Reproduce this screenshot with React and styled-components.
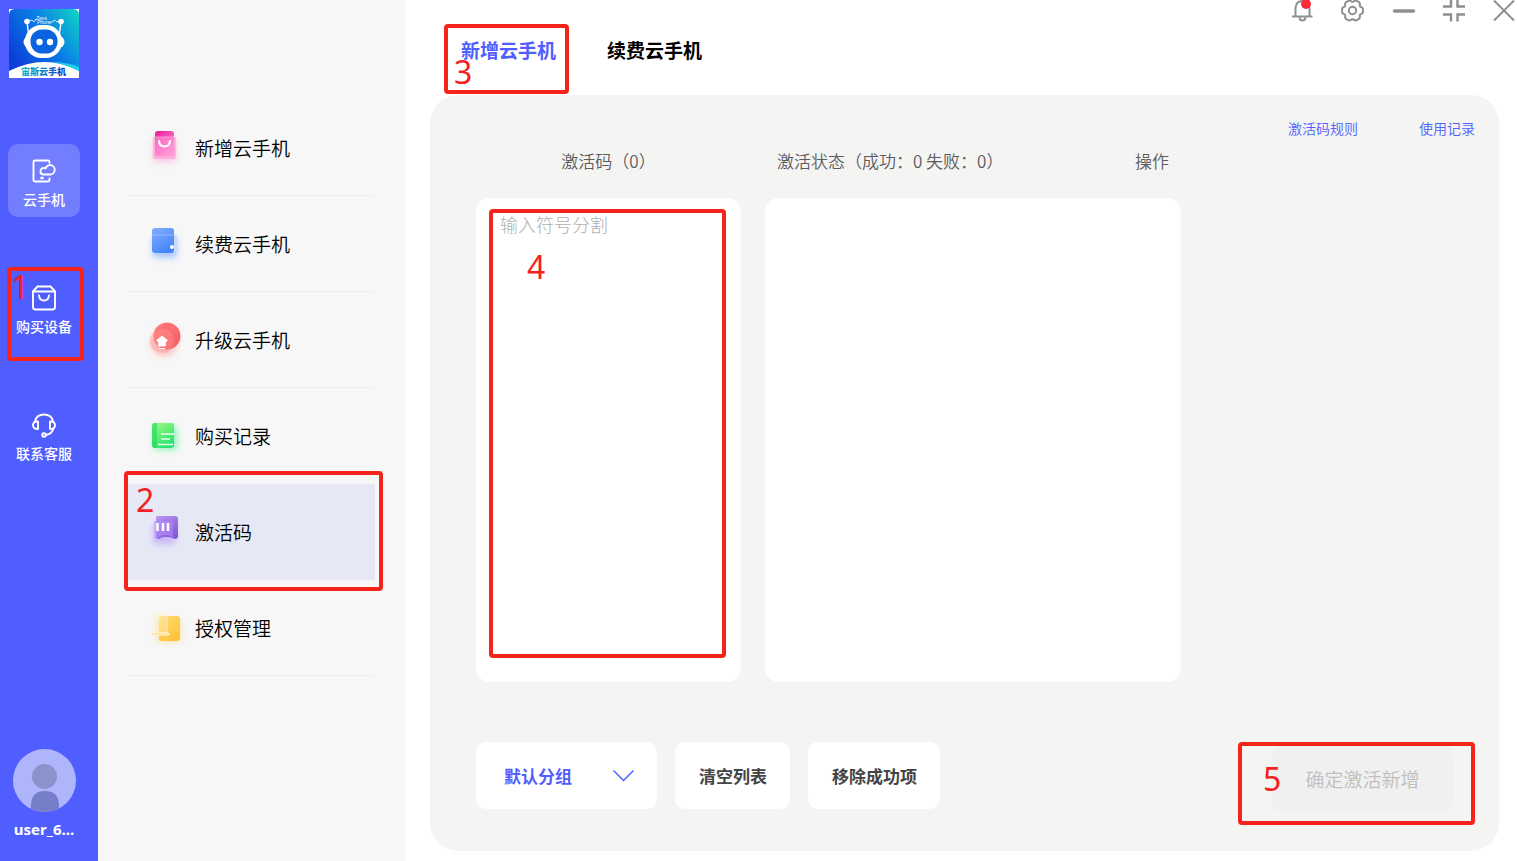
import React, {useState} from 'react';
import styled, {createGlobalStyle} from 'styled-components';


const GlobalStyle = createGlobalStyle`
    * {
        box-sizing: border-box;
    }
    body {
        margin: 0;
        font-family: "Noto Sans CJK SC", sans-serif;
        background-color: #ffffff;
        color: #000000;
    }
    button, select, textarea {
        font-family: inherit;
        border: none;
        margin: 0;
    }
    button, select {
        cursor: pointer;
    }
    svg {
        display: block;
        overflow: visible;
    }
`;

const Page = styled.div`
    display: grid;
    grid-template-columns: 98px 308px 1fr;
    min-height: 100vh;
`;

const Rail = styled.aside`
    display: flex;
    flex-direction: column;
    padding: 9px 18px 21px 8px;
    background-color: #505eff;
`;

const Logo = styled.a`
    align-self: center;
    width: 70px;
    height: 69px;
`;

const RailNav = styled.nav`
    display: flex;
    flex-direction: column;
    gap: 54px;
    margin-top: 66px;
`;

const RailButton = styled.button`
    position: relative;
    display: flex;
    flex-direction: column;
    align-items: center;
    gap: 5px;
    height: 73px;
    padding: 14px 0 0;
    border-radius: 10px;
    background-color: ${({$active}) => ($active ? '#737eff' : 'transparent')};
    color: #ffffff;
    font-size: 14px;
    font-weight: 500;
    line-height: 20px;
    white-space: nowrap;
`;

const User = styled.div`
    display: flex;
    flex-direction: column;
    align-items: center;
    gap: 6px;
    margin-top: auto;
    color: #ffffff;
    font-family: "Noto Sans", "Noto Sans CJK SC", sans-serif;
    font-size: 15px;
    font-weight: 700;
    line-height: 22px;
`;

const Menu = styled.nav`
    padding: 100px 31px 0 30px;
    background-color: #f7f7f7;
`;

const MenuButton = styled.button`
    position: relative;
    display: flex;
    align-items: center;
    gap: 9px;
    width: 100%;
    height: 96px;
    padding: 0 22px;
    border-bottom: 1px solid ${({$line}) => ($line ? '#eeeeee' : 'transparent')};
    background-color: ${({$active}) => ($active ? '#e6e8f6' : 'transparent')};
    color: #000000;
    font-size: 19px;
    font-weight: 350;
    line-height: 28px;
`;

const Main = styled.main`
    display: flex;
    flex-direction: column;
    min-width: 0;
`;

const Header = styled.header`
    display: flex;
    justify-content: space-between;
    align-items: flex-start;
    height: 95px;
    padding-left: 55px;
`;

const Tabs = styled.div`
    display: flex;
    gap: 51px;
    padding-top: 36px;
`;

const Tab = styled.button`
    position: relative;
    padding: 0;
    background: none;
    color: ${({$active}) => ($active ? '#505eff' : '#000000')};
    font-size: 19px;
    font-weight: 700;
    line-height: 28px;
`;

const WindowControls = styled.div`
    display: flex;
    gap: 26px;
    padding-right: 1px;
`;

const IconButton = styled.button`
    width: 24px;
    height: 24px;
    padding: 0;
    background: none;
    color: #8f8f8f;
`;

const Panel = styled.section`
    display: flex;
    flex: 1;
    flex-direction: column;
    margin: 0 18px 10px 24px;
    padding: 23px 24px 42px 46px;
    border-radius: 28px;
    background-color: #f4f4f2;
`;

const Links = styled.div`
    display: flex;
    justify-content: flex-end;
    gap: 61px;
`;

const Link = styled.a`
    color: #505eff;
    font-size: 14px;
    font-weight: 350;
    line-height: 20px;
    text-decoration: none;
`;

const Columns = styled.div`
    display: grid;
    flex: 1;
    grid-template-columns: 265fr 416fr 270fr;
    gap: 24px;
    margin-top: 11px;
`;

const Column = styled.div`
    display: flex;
    flex-direction: column;
    gap: 25px;
    color: #5c5c5c;
    font-size: 17px;
    font-weight: 350;
    line-height: 24px;
`;

const CodeLabel = styled.label`
    text-align: center;
`;

const StatusHead = styled.div`
    display: flex;
    justify-content: space-between;
    padding: 0 12px;
`;

const Card = styled.div`
    position: relative;
    display: flex;
    flex: 1;
    border-radius: 14px;
    background-color: #ffffff;
`;

const CodeInput = styled.textarea`
    width: 100%;
    padding: 14px 24px;
    border-radius: 14px;
    background: none;
    outline: none;
    resize: none;
    color: #444444;
    font-size: 18px;
    font-weight: 300;
    line-height: 24px;
    &::placeholder {
        color: #b0b0b0;
        opacity: 1;
    }
`;

const Footer = styled.div`
    display: flex;
    align-items: flex-start;
    gap: 18px;
    height: 67px;
    margin-top: 60px;
`;

const GroupPicker = styled.div`
    position: relative;
    width: 181px;
    height: 67px;
    svg {
        position: absolute;
        top: 28px;
        right: 23px;
        pointer-events: none;
    }
`;

const GroupSelect = styled.select`
    width: 100%;
    height: 100%;
    padding: 0 28px;
    border-radius: 10px;
    appearance: none;
    background-color: #ffffff;
    color: #505eff;
    font-size: 17px;
    font-weight: 700;
`;

const ActionButton = styled.button`
    height: 67px;
    padding: 0 23px 0 24px;
    border-radius: 10px;
    background-color: #ffffff;
    color: #444444;
    font-size: 17px;
    font-weight: 700;
`;

const ConfirmButton = styled.button`
    position: relative;
    width: 181px;
    height: 67px;
    margin: 3px 22px 0 auto;
    padding: 0;
    border-radius: 10px;
    background-color: #f0f0f0;
    color: #bfbfbf;
    font-size: 19px;
    font-weight: 350;
`;

const Frame = styled.span`
    position: absolute;
    top: ${({$top}) => $top}px;
    left: ${({$left}) => $left}px;
    width: ${({$width}) => $width}px;
    height: ${({$height}) => $height}px;
    border: 4px solid #f4241a;
    border-radius: 4px;
    pointer-events: none;
`;

// frame of the code box keeps its distance to all four sides
const CodeFrame = styled(Frame)`
    inset: 11px 15px 24px 13px;
    width: auto;
    height: auto;
`;

const Step = styled.span`
    position: absolute;
    top: ${({$top}) => $top}px;
    left: ${({$left}) => $left}px;
    color: #f41f20;
    font-family: "Noto Sans", sans-serif;
    font-size: 32px;
    font-weight: 400;
    line-height: 32px;
`;

function LogoImage() {
    return <svg width="70" height="69" viewBox="0 0 70 69">
        <defs>
            <linearGradient id="logoBg" x1="0" y1="0.7" x2="1" y2="0.1">
                <stop offset="0" stopColor="#0a3fd8"/>
                <stop offset="0.55" stopColor="#0b7fe6"/>
                <stop offset="1" stopColor="#0fd0c8"/>
            </linearGradient>
            <linearGradient id="logoText" x1="0" y1="0" x2="1" y2="0">
                <stop offset="0" stopColor="#12b8c4"/>
                <stop offset="1" stopColor="#0a3fc8"/>
            </linearGradient>
        </defs>
        <rect width="70" height="69" fill="#fff"/>
        <path d="M0 6Q0 0 6 0H64Q70 0 70 6V62Q36 44 0 62Z" fill="url(#logoBg)"/>
        <path d="M42 53Q57 55 70 62V58Q58 53 42 53Z" fill="#18d4ea"/>
        <path d="M18 13L20 28M52 13L50 28" stroke="#fff" strokeWidth="1.4"/>
        <circle cx="18" cy="12.500" r="2.800" fill="#fff"/>
        <circle cx="52" cy="12.500" r="2.800" fill="#fff"/>
        <path d="M20 12L23 11L25 13L27 10M43 13L46 11L48 13L51 12" stroke="#fff" strokeWidth="0.8" fill="none"/>
        <rect x="14.500" y="27" width="41" height="12" rx="6" fill="#fff"/>
        <rect x="16" y="16" width="37" height="33" rx="16" fill="#fff"/>
        <rect x="21.500" y="20.500" width="27" height="24" rx="11.500" fill="#0a63df"/>
        <circle cx="30.500" cy="33" r="3.200" fill="#fff"/>
        <circle cx="41" cy="33" r="3.200" fill="#fff"/>
        <text x="27" y="11" fill="#fff" fontFamily="Liberation Sans, sans-serif" fontSize="5" fontStyle="italic">Zeus</text>
        <text x="28" y="15" fill="#fff" fontFamily="Liberation Sans, sans-serif" fontSize="5" fontStyle="italic">Phone</text>
        <text x="12" y="66" fill="url(#logoText)" fontSize="9" fontWeight="900">宙斯云手机</text>
    </svg>
}

function RailIcon({name}) {
    return <svg width="26" height="26" viewBox="0 0 26 26" fill="none" stroke="#fff" strokeWidth="1.900" strokeLinejoin="round" strokeLinecap="round">
        {name === 'phone' && <>
            <path d="M18.500 5V4Q18.500 2.500 17 2.500H4Q2.500 2.500 2.500 4V22Q2.500 23.500 4 23.500H17Q18.500 23.500 18.500 22V20.500"/>
            <path d="M12.500 16.500H19A4.700 4.700 0 1 0 14.500 10.500A3.200 3.200 0 0 0 9.500 13.500Q9.500 16.500 12.500 16.500"/>
            <path d="M10.500 20H11.500" strokeWidth="2.600"/>
        </>}
        {name === 'bag' && <>
            <path d="M6.500 1.500H19.500L24 6.500V22Q24 24.500 21.500 24.500H4.500Q2 24.500 2 22V6.500Z"/>
            <path d="M2 6.500H24"/>
            <path d="M8 10.500Q8.500 15.500 13 15.500T18 10.500"/>
        </>}
        {name === 'service' && <>
            <path d="M4 9.500C5 4.500 8.500 2.500 13 2.500S21 4.500 22 9.500"/>
            <path d="M7 9.500V17Q2 17 2 13.200T7 9.500Z"/>
            <path d="M19 9.500V17Q24 17 24 13.200T19 9.500Z"/>
            <path d="M22.500 16.500Q21 22 15 23"/>
            <circle cx="13" cy="23" r="1.800"/>
        </>}
    </svg>
}

function Avatar() {
    return <svg width="63" height="63" viewBox="0 0 63 63">
        <clipPath id="avatarClip"><circle cx="31.500" cy="31.500" r="31.500"/></clipPath>
        <g clipPath="url(#avatarClip)">
            <rect width="63" height="63" fill="#afb5fb"/>
            <circle cx="31.500" cy="27.500" r="12.500" fill="#8b92cc"/>
            <path d="M18 63V55Q19 42 32 42T46 55V63Z" fill="#777ec9"/>
        </g>
    </svg>
}

const menuColors = {
    add: ['#f0149b', '#ff9ed8'],
    renew: ['#85adff', '#4385fa'],
    upgrade: ['#ff7c7c', '#f85f62'],
    record: ['#a8f77e', '#25e571'],
    code: ['#b795f2', '#8758dc'],
    auth: ['#ffdc72', '#ffc33d'],
};

function MenuIcon({name}) {
    const [from, to] = menuColors[name];
    const fill = `url(#menu-${name})`;
    return <svg width="36" height="36" viewBox="0 0 36 36">
        <defs>
            <linearGradient id={`menu-${name}`} x1="0" y1="0" x2="0.600" y2="1">
                <stop offset="0" stopColor={from}/>
                <stop offset="1" stopColor={to}/>
            </linearGradient>
            <filter id={`glow-${name}`} x="-50%" y="-50%" width="200%" height="200%">
                <feGaussianBlur stdDeviation="3"/>
            </filter>
        </defs>
        {name === 'add' && <>
            <rect x="3" y="10" width="23" height="22" rx="3" fill="#ff70c4" opacity="0.35" filter="url(#glow-add)"/>
            <rect x="5" y="1" width="19" height="25" rx="3" fill={fill}/>
            <path d="M3 7H26V27Q26 29 24 29H5Q3 29 3 27Z" fill="#ff8fd2" fillOpacity="0.6" stroke="#ffc9e9" strokeOpacity="0.7" strokeWidth="0.8"/>
            <path d="M9 11Q9.500 16.500 14.500 16.500T20 11" fill="none" stroke="#fff" strokeWidth="2.200" strokeLinecap="round"/>
        </>}
        {name === 'renew' && <>
            <rect x="3" y="11" width="24" height="21" rx="3" fill="#4c8cff" opacity="0.45" filter="url(#glow-renew)"/>
            <path d="M22 9H25Q27 9 27 11V24Q27 26 25 26H22Z" fill="#c8dbff"/>
            <rect x="2" y="2" width="22" height="25" rx="3" fill={fill}/>
            <path d="M2 9H24" stroke="#a6c4ff" strokeWidth="0.8"/>
            <circle cx="22" cy="21" r="2" fill="#fff"/>
        </>}
        {name === 'upgrade' && <>
            <circle cx="14" cy="21" r="13" fill="#ff7070" opacity="0.4" filter="url(#glow-upgrade)"/>
            <circle cx="17" cy="14" r="13.500" fill={fill}/>
            <circle cx="12" cy="19" r="12" fill="#ff9696" fillOpacity="0.4"/>
            <path d="M12 14L17.500 18.500L15.500 20V24H8.500V20L6.500 18.500Z" fill="#fff" stroke="#fff" strokeWidth="0.8" strokeLinejoin="round"/>
            <path d="M9 26.500H15" stroke="#fff" strokeWidth="1"/>
        </>}
        {name === 'record' && <>
            <rect x="4" y="8" width="23" height="24" rx="3" fill="#30f080" opacity="0.5" filter="url(#glow-record)"/>
            <rect x="2" y="5" width="22" height="25" rx="3" fill={fill}/>
            <path d="M2 8Q2 5 5 5H7V30H5Q2 30 2 27Z" fill="#20d865" fillOpacity="0.65"/>
            <path d="M11 16H24M11 21H20M8 26.500H23" stroke="#e9ffe9" strokeWidth="1.500"/>
        </>}
        {name === 'code' && <>
            <rect x="3" y="10" width="22" height="20" rx="3" fill="#a06cff" opacity="0.4" filter="url(#glow-code)"/>
            <path d="M7 2H25Q28 2 28 5V22Q28 25 25 25L19 23H13L9 25Q6 25 6 22V5Q6 2 7 2Z" fill={fill}/>
            <path d="M4 7H21Q23 7 23 9V24L17 21H13L6 25Q4 25 4 23Z" fill="#b592f7" fillOpacity="0.5"/>
            <path d="M7.500 9V17M13 9V17M18 9V17" stroke="#fff" strokeWidth="2.500"/>
        </>}
        {name === 'auth' && <>
            <rect x="7" y="10" width="24" height="22" rx="3" fill="#ffc93c" opacity="0.4" filter="url(#glow-auth)"/>
            <rect x="9" y="6" width="21" height="25" rx="3" fill={fill}/>
            <path d="M4 13Q2 4 8 3H13Q17 4 17 8V23H6Z" fill="#fff0c0" fillOpacity="0.4" stroke="#fff3d0" strokeWidth="0.800"/>
            <path d="M2 24H18" stroke="#fff5cf" strokeWidth="3" strokeLinecap="round"/>
            <path d="M2 24H17" stroke="#ffd769" strokeWidth="0.800" strokeLinecap="round"/>
        </>}
    </svg>
}

// six soft lobes around the middle of the settings icon
const gearPoints = Array.from({length: 72}, (_, i) => {
    const angle = (i * Math.PI) / 36;
    const wave = Math.cos(6 * angle);
    const radius = 9.9 + 0.9 * wave - 0.4 * Math.cos(12 * angle);
    return `${(10.5 + radius * Math.cos(angle)).toFixed(2)},${(10.5 + radius * Math.sin(angle)).toFixed(2)}`;
}).join(' ');

function ControlIcon({name}) {
    return <svg width="24" height="24" viewBox="0 0 24 24" fill="none" stroke="currentColor" strokeWidth="2">
        {name === 'bell' && <>
            <path d="M0 16.500H20.500M3.500 16V8Q4 1 10.500 1T17.500 8V16"/>
            <path d="M7.500 17.500Q8 20.500 10.500 20.500T13.500 17.500"/>
            <circle cx="14" cy="4" r="5" fill="#fb2c3a" stroke="none"/>
        </>}
        {name === 'settings' && <>
            <polygon points={gearPoints} strokeLinejoin="round"/>
            <circle cx="10.500" cy="10.500" r="3.700"/>
        </>}
        {name === 'minimize' && <path d="M2.500 11H21.500" strokeWidth="3.500" strokeLinecap="round"/>}
        {name === 'restore' && <path d="M9 -1V6.500H1M15.500 -1V6.500H23M9 21.500V14.500H1M15.500 21.500V14.500H23" strokeWidth="2.400"/>}
        {name === 'close' && <path d="M2 0.500L22 20.500M22 0.500L2 20.500"/>}
    </svg>
}

const menuItems = [
    {id: 'add', title: '新增云手机', line: true},
    {id: 'renew', title: '续费云手机', line: true},
    {id: 'upgrade', title: '升级云手机', line: true},
    {id: 'record', title: '购买记录'},
    {id: 'code', title: '激活码'},
    {id: 'auth', title: '授权管理', line: true},
];

const controls = [
    ['bell', '消息'],
    ['settings', '设置'],
    ['minimize', '最小化'],
    ['restore', '还原'],
    ['close', '关闭'],
];

function App() {
    const [menu, setMenu] = useState('code');
    const [tab, setTab] = useState('add');
    const [codes, setCodes] = useState('');

    return <Page>
        <GlobalStyle/>
        <Rail>
            <Logo href="#" aria-label="宙斯云手机"><LogoImage/></Logo>
            <RailNav>
                <RailButton $active>
                    <RailIcon name="phone"/>
                    云手机
                </RailButton>
                <RailButton>
                    <RailIcon name="bag"/>
                    购买设备
                    <Frame $top={-4} $left={-1} $width={77} $height={94}>
                        <Step $top={0} $left={0}>1</Step>
                    </Frame>
                </RailButton>
                <RailButton>
                    <RailIcon name="service"/>
                    联系客服
                </RailButton>
            </RailNav>
            <User>
                <Avatar/>
                user_6...
            </User>
        </Rail>

        <Menu>
            {menuItems.map((item) => (
                <MenuButton key={item.id} $active={menu === item.id} $line={item.line} onClick={() => setMenu(item.id)}>
                    <MenuIcon name={item.id}/>
                    {item.title}
                    {item.id === 'code' && <Frame $top={-13} $left={-4} $width={259} $height={120}>
                        <Step $top={9} $left={8}>2</Step>
                    </Frame>}
                </MenuButton>
            ))}
        </Menu>

        <Main>
            <Header>
                <Tabs>
                    <Tab $active={tab === 'add'} onClick={() => setTab('add')}>
                        新增云手机
                        <Frame $top={-12} $left={-17} $width={125} $height={70}>
                            <Step $top={28} $left={6}>3</Step>
                        </Frame>
                    </Tab>
                    <Tab $active={tab === 'renew'} onClick={() => setTab('renew')}>续费云手机</Tab>
                </Tabs>
                <WindowControls>
                    {controls.map(([name, title]) => (
                        <IconButton key={name} aria-label={title}><ControlIcon name={name}/></IconButton>
                    ))}
                </WindowControls>
            </Header>

            <Panel>
                <Links>
                    <Link href="#rules">激活码规则</Link>
                    <Link href="#history">使用记录</Link>
                </Links>
                <Columns>
                    <Column>
                        <CodeLabel htmlFor="codes">激活码（0）</CodeLabel>
                        <Card>
                            <CodeInput id="codes" placeholder="输入符号分割" value={codes} onChange={(e) => setCodes(e.target.value)}/>
                            <CodeFrame>
                                <Step $top={38} $left={34}>4</Step>
                            </CodeFrame>
                        </Card>
                    </Column>
                    <Column>
                        <StatusHead>
                            <span>激活状态（成功：0 失败：0）</span>
                            <span>操作</span>
                        </StatusHead>
                        <Card/>
                    </Column>
                </Columns>
                <Footer>
                    <GroupPicker>
                        <GroupSelect aria-label="分组" defaultValue="default">
                            <option value="default">默认分组</option>
                        </GroupSelect>
                        <svg width="21" height="12" viewBox="0 0 21 12" fill="none" stroke="#505eff" strokeWidth="1.500">
                            <path d="M0.500 0.500L10.500 10.500L20.500 0.500"/>
                        </svg>
                    </GroupPicker>
                    <ActionButton>清空列表</ActionButton>
                    <ActionButton>移除成功项</ActionButton>
                    <ConfirmButton disabled>
                        确定激活新增
                        <Frame $top={-3} $left={-34} $width={237} $height={83}>
                            <Step $top={17} $left={21}>5</Step>
                        </Frame>
                    </ConfirmButton>
                </Footer>
            </Panel>
        </Main>
    </Page>
}

export default App;
